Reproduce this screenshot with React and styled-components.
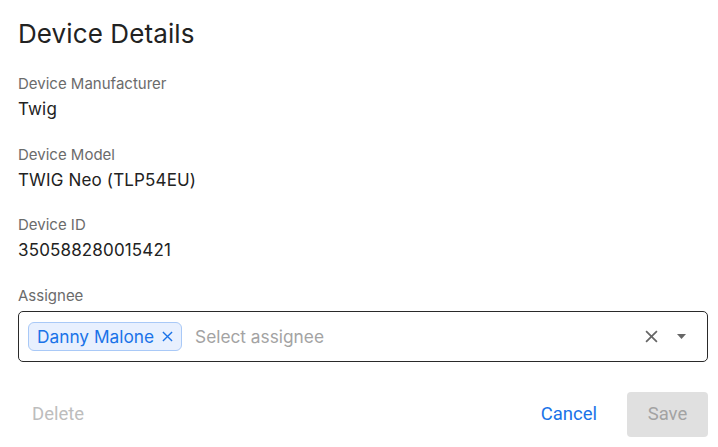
import React from 'react'
import styled, { createGlobalStyle } from 'styled-components'

const GlobalStyle = createGlobalStyle`
  html, body {
    margin: 0;
    padding: 0;
    background: #ffffff;
  }
  body {
    font-family: Inter, "Noto Sans", sans-serif;
  }
`

const Panel = styled.section`
  display: flex;
  flex-direction: column;
  padding: 18px 10px 0 18px;
  width: 718px;
  box-sizing: border-box;
`

const Title = styled.h2`
  margin: 0 0 24px;
  font-size: 26px;
  line-height: 32px;
  font-weight: 400;
  color: #222222;
  letter-spacing: 0.1px;
`

const Field = styled.div`
  display: flex;
  flex-direction: column;
  gap: 3px;
  margin-bottom: 23.5px;
`

const Label = styled.div`
  font-size: 15px;
  line-height: 20px;
  color: #6b6b6b;
`

const Value = styled.div`
  font-size: 17px;
  line-height: 24px;
  color: #222222;
  letter-spacing: 0.15px;
`

const SelectBox = styled.div`
  display: flex;
  align-items: center;
  height: 51px;
  box-sizing: border-box;
  margin-top: 5px;
  padding: 0 21px 0 9px;
  border: 1px solid #2a2a2a;
  border-radius: 5px;
  gap: 13px;
`

const Chip = styled.span`
  display: inline-flex;
  align-items: center;
  gap: 8px;
  height: 29px;
  box-sizing: border-box;
  padding: 0 8px;
  border: 1px solid #a9c9f7;
  border-radius: 6px;
  background: #e8f0fe;
  color: #1a73e8;
  font-size: 17.3px;
`

const Placeholder = styled.input`
  flex: 1;
  min-width: 0;
  border: none;
  outline: none;
  padding: 0;
  font: inherit;
  font-size: 17.3px;
  color: #222222;
  background: transparent;

  &::placeholder {
    color: #a3a3a3;
  }
`

const IconButton = styled.button`
  display: inline-flex;
  align-items: center;
  justify-content: center;
  padding: 0;
  border: 0;
  background: none;
  cursor: pointer;
  color: ${p => p.$color || '#666666'};
  margin-left: ${p => p.$gap || 0}px;
`

const Actions = styled.div`
  display: flex;
  align-items: center;
  margin-top: 30px;
`

const Spacer = styled.div`
  flex: 1;
`

const TextButton = styled.button`
  height: 45px;
  padding: 0 14px;
  border: 0;
  border-radius: 4px;
  background: ${p => (p.$filled ? '#e0e0e0' : 'transparent')};
  color: ${p => p.$color};
  font-family: Roboto, "Liberation Sans", sans-serif;
  font-size: 18.5px;
  font-weight: 400;
  cursor: pointer;
  min-width: ${p => (p.$filled ? '81px' : 'auto')};
  margin-left: ${p => (p.$filled ? '16px' : '0')};
`

const Cross = ({ size, width = 1.6 }) => (
  <svg width={size} height={size} viewBox="0 0 12 12" fill="none">
    <path d="M1 1L11 11M11 1L1 11" stroke="currentColor" strokeWidth={width} />
  </svg>
)

const Caret = () => (
  <svg width="9" height="5" viewBox="0 0 9 5">
    <path d="M0 0H9L4.5 5Z" fill="currentColor" />
  </svg>
)

const details = [
  ['Device Manufacturer', 'Twig'],
  ['Device Model', 'TWIG Neo (TLP54EU)'],
  ['Device ID', '350588280015421'],
]

export default function App() {
  return (
    <>
      <GlobalStyle />
      <Panel>
        <Title>Device Details</Title>
        {details.map(([label, value]) => (
          <Field key={label}>
            <Label>{label}</Label>
            <Value>{value}</Value>
          </Field>
        ))}
        <Label>Assignee</Label>
        <SelectBox>
          <Chip>
            Danny Malone
            <IconButton $color="#1a73e8" aria-label="Remove">
              <Cross size={11} width={1.5} />
            </IconButton>
          </Chip>
          <Placeholder placeholder="Select assignee" />
          <IconButton aria-label="Clear">
            <Cross size={13} width={1.6} />
          </IconButton>
          <IconButton aria-label="Open" $gap={6}>
            <Caret />
          </IconButton>
        </SelectBox>
        <Actions>
          <TextButton $color="#bdbdbd">Delete</TextButton>
          <Spacer />
          <TextButton $color="#1a73e8">Cancel</TextButton>
          <TextButton $filled $color="#a3a3a3">Save</TextButton>
        </Actions>
      </Panel>
    </>
  )
}
